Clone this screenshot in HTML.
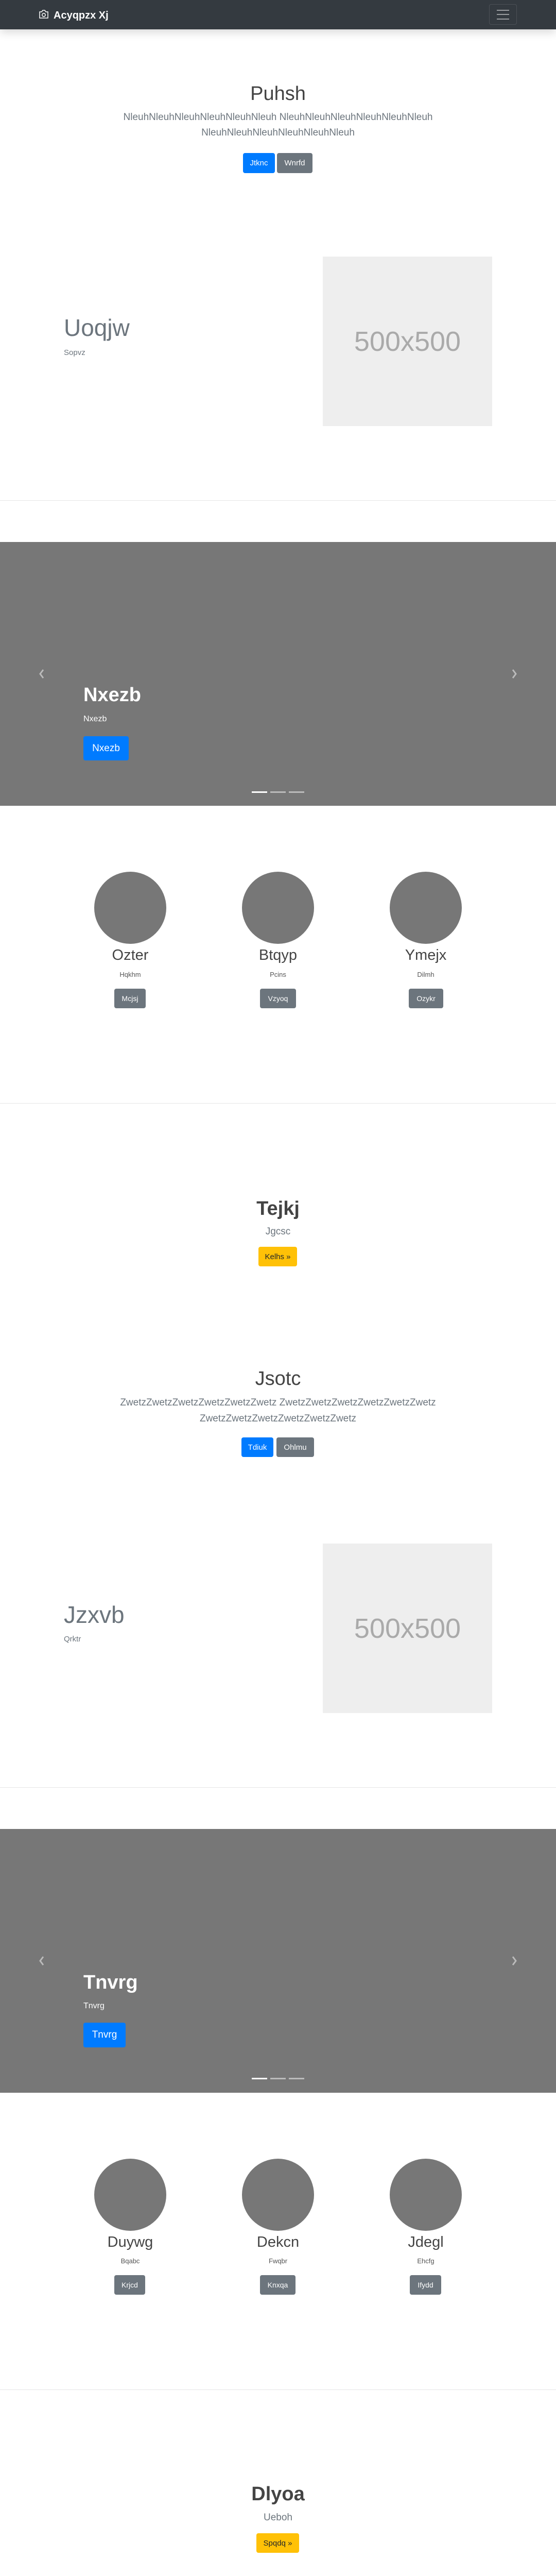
<!DOCTYPE html>
<html style="overflow:hidden;width:1080px;height:5075px"><head><meta charset="utf-8"><style>
*{margin:0;padding:0;box-sizing:border-box}
html,body{overflow:hidden}
body{width:1080px;height:5075px;position:relative;background:#fff;font-family:"Liberation Sans",sans-serif}
.a{position:absolute}
.c{position:absolute;left:0;width:1080px;text-align:center;white-space:nowrap}
.n{position:absolute;width:200px;text-align:center;white-space:nowrap}
.btn{position:absolute;color:#fff;border-radius:4px;text-align:center;font-size:15px;display:flex;align-items:center;justify-content:center}
.bp{background:#007bff}.bs{background:#6c757d}.bw{background:#ffc107;color:#212529}
.hr{position:absolute;left:0;width:1080px;height:1px;background:#e5e5e5}
.car{position:absolute;left:0;width:1080px;height:512px;background:#777}
.img{position:absolute;left:627px;width:329px;height:329px;background:#eee;color:#aaa;font-size:54px;display:flex;align-items:center;justify-content:center}
.circ{position:absolute;width:140px;height:140px;border-radius:50%;background:#777}
</style></head><body>
<div class="a" style="left:0;top:0;width:1080px;height:57px;background:#343a40;box-shadow:0 6px 16px rgba(0,0,0,.15)"></div>
<svg class="a" style="left:75px;top:19px" width="20" height="17" viewBox="0 0 20 17"><path d="M2 4h4l2-3h4l2 3h4v12H2z" fill="none" stroke="#fff" stroke-width="1.5"/><circle cx="10" cy="10" r="3.2" fill="none" stroke="#fff" stroke-width="1.5"/></svg>
<div class="a" style="left:104px;top:17px;font-size:20px;font-weight:bold;color:#fff;line-height:26px">Acyqpzx Xj</div>
<div class="a" style="left:950px;top:8px;width:54px;height:40px;border:1px solid rgba(255,255,255,.12);border-radius:4px"></div>
<div class="a" style="left:965px;top:19px;width:24px;height:2px;background:rgba(255,255,255,.5)"></div>
<div class="a" style="left:965px;top:27px;width:24px;height:2px;background:rgba(255,255,255,.5)"></div>
<div class="a" style="left:965px;top:36px;width:24px;height:2px;background:rgba(255,255,255,.5)"></div>

<div class="c" style="top:158px;line-height:48px;font-size:38px;color:#444;font-weight:300">Puhsh</div>
<div class="c" style="top:213px;line-height:30px;font-size:19px;color:#6c757d">NleuhNleuhNleuhNleuhNleuhNleuh NleuhNleuhNleuhNleuhNleuhNleuh<br>NleuhNleuhNleuhNleuhNleuhNleuh</div>
<div class="btn bp" style="left:472px;top:297px;width:62px;height:39px">Jtknc</div>
<div class="btn bs" style="left:538px;top:297px;width:69px;height:39px">Wnrfd</div>

<div class="a" style="left:124px;top:608px;font-size:46px;line-height:56px;color:#6c757d">Uoqjw</div>
<div class="a" style="left:124px;top:675px;font-size:15px;line-height:20px;color:#6c757d">Sopvz</div>
<div class="img" style="top:498px">500x500</div>
<div class="hr" style="top:971px"></div>

<div class="car" style="top:1052px"></div>
<svg class="a" style="left:76px;top:1299px" width="10" height="18"><path d="M8 1L2 9l6 8" fill="none" stroke="rgba(255,255,255,.5)" stroke-width="3"/></svg>
<svg class="a" style="left:994px;top:1299px" width="10" height="18"><path d="M2 1l6 8-6 8" fill="none" stroke="rgba(255,255,255,.5)" stroke-width="3"/></svg>
<div class="a" style="left:162px;top:1325px;font-size:38px;line-height:48px;color:#fff;font-weight:bold">Nxezb</div>
<div class="a" style="left:162px;top:1386px;font-size:16px;line-height:20px;color:#fff">Nxezb</div>
<div class="btn bp" style="left:162px;top:1429px;width:88px;height:47px;font-size:19px">Nxezb</div>
<div class="a" style="left:489px;top:1536px;width:30px;height:3px;background:#fff"></div>
<div class="a" style="left:525px;top:1536px;width:30px;height:3px;background:rgba(255,255,255,.5)"></div>
<div class="a" style="left:561px;top:1536px;width:30px;height:3px;background:rgba(255,255,255,.5)"></div>

<div class="circ" style="left:183px;top:1692px"></div>
<div class="circ" style="left:470px;top:1692px"></div>
<div class="circ" style="left:757px;top:1692px"></div>
<div class="n" style="left:153px;top:1836px;font-size:29px;line-height:36px;color:#444">Ozter</div>
<div class="n" style="left:440px;top:1836px;font-size:29px;line-height:36px;color:#444">Btqyp</div>
<div class="n" style="left:727px;top:1836px;font-size:29px;line-height:36px;color:#444">Ymejx</div>
<div class="n" style="left:153px;top:1884px;font-size:13px;line-height:16px;color:#555">Hqkhm</div>
<div class="n" style="left:440px;top:1884px;font-size:13px;line-height:16px;color:#555">Pcins</div>
<div class="n" style="left:727px;top:1884px;font-size:13px;line-height:16px;color:#555">Dilmh</div>
<div class="btn bs" style="left:222px;top:1919px;width:61px;height:38px;font-size:14px">Mcjsj</div>
<div class="btn bs" style="left:505px;top:1919px;width:70px;height:38px;font-size:14px">Vzyoq</div>
<div class="btn bs" style="left:794px;top:1919px;width:67px;height:38px;font-size:14px">Ozykr</div>
<div class="hr" style="top:2141px"></div>

<div class="c" style="top:2322px;font-size:38px;line-height:48px;color:#444;font-weight:bold">Tejkj</div>
<div class="c" style="top:2379px;font-size:19px;line-height:24px;color:#6c757d">Jgcsc</div>
<div class="btn bw" style="left:502px;top:2420px;width:75px;height:38px">Kelhs »</div>

<div class="c" style="top:2652px;line-height:48px;font-size:38px;color:#444">Jsotc</div>
<div class="c" style="top:2707px;line-height:31px;font-size:19px;color:#6c757d">ZwetzZwetzZwetzZwetzZwetzZwetz ZwetzZwetzZwetzZwetzZwetzZwetz<br>ZwetzZwetzZwetzZwetzZwetzZwetz</div>
<div class="btn bp" style="left:469px;top:2790px;width:62px;height:38px">Tdiuk</div>
<div class="btn bs" style="left:537px;top:2790px;width:73px;height:38px">Ohlmu</div>

<div class="a" style="left:124px;top:3106px;font-size:46px;line-height:56px;color:#6c757d">Jzxvb</div>
<div class="a" style="left:124px;top:3172px;font-size:15px;line-height:20px;color:#6c757d">Qrktr</div>
<div class="img" style="top:2996px">500x500</div>
<div class="hr" style="top:3469px"></div>

<div class="car" style="top:3550px"></div>
<svg class="a" style="left:76px;top:3797px" width="10" height="18"><path d="M8 1L2 9l6 8" fill="none" stroke="rgba(255,255,255,.5)" stroke-width="3"/></svg>
<svg class="a" style="left:994px;top:3797px" width="10" height="18"><path d="M2 1l6 8-6 8" fill="none" stroke="rgba(255,255,255,.5)" stroke-width="3"/></svg>
<div class="a" style="left:162px;top:3824px;font-size:38px;line-height:48px;color:#fff;font-weight:bold">Tnvrg</div>
<div class="a" style="left:162px;top:3884px;font-size:16px;line-height:20px;color:#fff">Tnvrg</div>
<div class="btn bp" style="left:162px;top:3926px;width:82px;height:48px;font-size:19px">Tnvrg</div>
<div class="a" style="left:489px;top:4033px;width:30px;height:3px;background:#fff"></div>
<div class="a" style="left:525px;top:4033px;width:30px;height:3px;background:rgba(255,255,255,.5)"></div>
<div class="a" style="left:561px;top:4033px;width:30px;height:3px;background:rgba(255,255,255,.5)"></div>

<div class="circ" style="left:183px;top:4190px"></div>
<div class="circ" style="left:470px;top:4190px"></div>
<div class="circ" style="left:757px;top:4190px"></div>
<div class="n" style="left:153px;top:4334px;font-size:29px;line-height:36px;color:#444">Duywg</div>
<div class="n" style="left:440px;top:4334px;font-size:29px;line-height:36px;color:#444">Dekcn</div>
<div class="n" style="left:727px;top:4334px;font-size:29px;line-height:36px;color:#444">Jdegl</div>
<div class="n" style="left:153px;top:4381px;font-size:13px;line-height:16px;color:#555">Bqabc</div>
<div class="n" style="left:440px;top:4381px;font-size:13px;line-height:16px;color:#555">Fwqbr</div>
<div class="n" style="left:727px;top:4381px;font-size:13px;line-height:16px;color:#555">Ehcfg</div>
<div class="btn bs" style="left:222px;top:4416px;width:60px;height:38px;font-size:14px">Krjcd</div>
<div class="btn bs" style="left:505px;top:4416px;width:69px;height:38px;font-size:14px">Knxqa</div>
<div class="btn bs" style="left:796px;top:4416px;width:61px;height:38px;font-size:14px">Ifydd</div>
<div class="hr" style="top:4638px"></div>

<div class="c" style="top:4817px;font-size:38px;line-height:48px;color:#444;font-weight:bold">Dlyoa</div>
<div class="c" style="top:4875px;font-size:19px;line-height:24px;color:#6c757d">Ueboh</div>
<div class="btn bw" style="left:498px;top:4917px;width:83px;height:38px">Spqdq »</div>

<div class="a" style="left:76px;top:5052px;font-size:15px;line-height:20px;color:#555">© Web Genrater 2022</div>
<div class="a" style="left:904px;width:100px;text-align:right;top:5052px;font-size:15px;line-height:20px;color:#007bff">Back to top</div>
</body></html>
